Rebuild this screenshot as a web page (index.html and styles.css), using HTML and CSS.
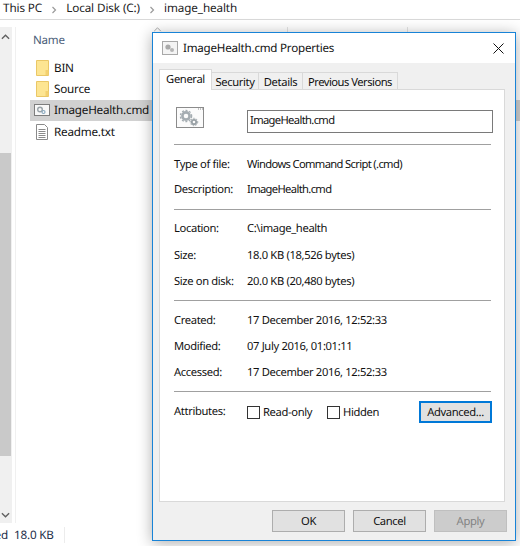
FILE: index.html
```html
<!DOCTYPE html>
<html lang="en">
<head>
<meta charset="utf-8">
<title>ImageHealth.cmd Properties</title>
<link rel="stylesheet" href="styles.css">
</head>
<body>
<div class="explorer">
  <div class="crumbs">
    <span>This PC</span>
    <svg class="chev" viewBox="0 0 6 8"><path d="M1.5 1l3 3-3 3" fill="none" stroke="#9a9a9a" stroke-width="1.2"/></svg>
    <span>Local Disk (C:)</span>
    <svg class="chev" viewBox="0 0 6 8"><path d="M1.5 1l3 3-3 3" fill="none" stroke="#9a9a9a" stroke-width="1.2"/></svg>
    <span>image_health</span>
  </div>
  <div class="main">
    <div class="scrollbar">
      <svg class="arrow" viewBox="0 0 10 6"><path d="M1 5l4-4 4 4" fill="none" stroke="#606060" stroke-width="1.5"/></svg>
      <div class="thumb"></div>
      <svg class="arrow" viewBox="0 0 10 6"><path d="M1 1l4 4 4-4" fill="none" stroke="#606060" stroke-width="1.5"/></svg>
    </div>
    <div class="files">
      <div class="col-head">Name</div>
      <ul class="file-list">
        <li class="file">
          <svg class="ficon" viewBox="0 0 16 16"><path d="M2.5.5h12v15h-12z" fill="#fde592" stroke="#eac766"/><path d="M11.5 15v-5h3v5z" fill="#f3d06f"/></svg>BIN
        </li>
        <li class="file">
          <svg class="ficon" viewBox="0 0 16 16"><path d="M2.5.5h12v15h-12z" fill="#fde592" stroke="#eac766"/><path d="M11.5 15v-5h3v5z" fill="#f3d06f"/></svg>Source
        </li>
        <li class="file selected">
          <svg class="ficon wide" viewBox="0 0 16 14"><rect x=".5" y="1.5" width="15" height="11" fill="#f8f8f8" stroke="#7d7d7d"/><circle cx="6" cy="6.5" r="2.3" fill="none" stroke="#9aa3a8" stroke-width="1.4"/><circle cx="9.5" cy="9" r="1.5" fill="none" stroke="#8aa9bf" stroke-width="1.2"/></svg>ImageHealth.cmd
        </li>
        <li class="file">
          <svg class="ficon" viewBox="0 0 16 16"><path d="M2.5.5h8l3 3v12h-11z" fill="#fff" stroke="#8a8a8a"/><path d="M4.5 5.5h7M4.5 7.5h7M4.5 9.5h7M4.5 11.5h7M4.5 13.5h7" stroke="#8a8a8a"/></svg>Readme.txt
        </li>
      </ul>
    </div>
  </div>
  <div class="status"><span class="clip">ed</span><span class="size">18.0 KB</span></div>
  <svg class="sort" viewBox="0 0 10 6"><path d="M1 5l4-4 4 4" fill="none" stroke="#9a9a9a"/></svg>
  <i class="head-sep sep-a"></i>
  <i class="head-sep sep-b"></i>
</div>

<section class="dialog">
  <header class="titlebar">
    <svg class="title-icon" viewBox="0 0 16 14"><rect x=".5" y=".5" width="15" height="13" fill="#f4f4f4" stroke="#a8a8a8"/><circle cx="6" cy="6" r="2.6" fill="#a9a9a9"/><circle cx="10" cy="9" r="2" fill="#b5b5b5"/></svg>
    <h1 class="title">ImageHealth.cmd Properties</h1>
    <svg class="close" viewBox="0 0 11 11"><path d="M.5.5l10 10M10.5.5l-10 10" stroke="#111" stroke-width="1"/></svg>
  </header>
  <div class="body">
    <nav class="tabs">
      <span class="tab active">General</span>
      <span class="tab t-sec">Security</span>
      <span class="tab t-det">Details</span>
      <span class="tab t-prev">Previous Versions</span>
    </nav>
    <div class="panel">
      <div class="name-row">
        <svg class="big-icon" viewBox="0 0 28 22">
          <rect x=".5" y=".5" width="27" height="20" fill="#fbfbfb" stroke="#8b8b8b"/>
          <path d="M22 2h1M24 2h1M26 2h1" stroke="#8b8b8b"/>
          <circle cx="10" cy="9" r="3.6" fill="none" stroke="#a5adb2" stroke-width="2.6"/>
          <circle cx="10" cy="9" r="5.6" fill="none" stroke="#a5adb2" stroke-width="1.4" stroke-dasharray="2 1.6"/>
          <circle cx="18" cy="15" r="2.2" fill="none" stroke="#98a0a5" stroke-width="1.8"/>
          <circle cx="18" cy="15" r="3.7" fill="none" stroke="#98a0a5" stroke-width="1" stroke-dasharray="1.5 1.2"/>
        </svg>
        <div class="name-box tight">ImageHealth.cmd</div>
      </div>
      <hr class="rule">
      <dl class="group g-type">
        <div class="row"><dt>Type of file:</dt><dd class="tight">Windows Command Script (.cmd)</dd></div>
        <div class="row"><dt>Description:</dt><dd class="tight">ImageHealth.cmd</dd></div>
      </dl>
      <hr class="rule">
      <dl class="group g-loc">
        <div class="row"><dt>Location:</dt><dd>C:\image_health</dd></div>
        <div class="row"><dt>Size:</dt><dd>18.0 KB (18,526 bytes)</dd></div>
        <div class="row"><dt>Size on disk:</dt><dd>20.0 KB (20,480 bytes)</dd></div>
      </dl>
      <hr class="rule">
      <dl class="group g-time">
        <div class="row"><dt>Created:</dt><dd>17 December 2016, 12:52:33</dd></div>
        <div class="row"><dt>Modified:</dt><dd>07 July 2016, 01:01:11</dd></div>
        <div class="row"><dt>Accessed:</dt><dd>17 December 2016, 12:52:33</dd></div>
      </dl>
      <hr class="rule">
      <div class="attrs">
        <span class="attr-label">Attributes:</span>
        <label class="check c-read"><i class="box"></i>Read-only</label>
        <label class="check c-hid"><i class="box"></i>Hidden</label>
        <span class="btn advanced">Advanced...</span>
      </div>
    </div>
    <footer class="actions">
      <span class="btn">OK</span>
      <span class="btn">Cancel</span>
      <span class="btn disabled">Apply</span>
    </footer>
  </div>
</section>
</body>
</html>
```
FILE: styles.css
```css
* { box-sizing: border-box; }
html, body { margin: 0; padding: 0; }
body {
  position: relative;
  width: 520px;
  height: 546px;
  overflow: hidden;
  background: #fff;
  color: #111;
  font-family: "Noto Sans", "Open Sans", sans-serif;
  font-size: 11.2px;
  letter-spacing: -0.35px;
  text-rendering: geometricPrecision;
}
.tight { letter-spacing: -0.65px; }
.explorer { position: relative; width: 520px; height: 546px; display: flex; flex-direction: column; }
.crumbs {
  height: 20px;
  border-bottom: 1px solid #d9d9d9;
  display: flex;
  align-items: flex-start;
  font-size: 11.7px;
  letter-spacing: -0.1px;
  line-height: 15px;
  padding: 1px 0 0 3px;
  gap: 9px;
  color: #222;
}
.chev { width: 6px; height: 8px; margin-top: 5px; }
.main { flex: none; height: 496px; margin-top: 7px; display: flex; }
.scrollbar {
  width: 12px;
  background: #f0f0f0;
  display: flex;
  flex-direction: column;
  align-items: flex-start;
  padding: 7px 0 5px;
}
.arrow { width: 9px; height: 6px; flex: none; margin-left: 1px; }
.thumb { width: 11px; height: 303px; margin-top: 113px; margin-bottom: 56px; background: #c9c9c9; flex: none; }
.files { flex: 1; min-width: 0; border-left: 1px solid #f0f0f0; margin-left: 3px; padding-left: 14px; }
.col-head { color: #4c607a; font-size: 11.6px; letter-spacing: -0.25px; line-height: 16px; padding: 6px 0 0 3px; height: 30px; }
.file-list { list-style: none; margin: 0 0 0 1px; padding: 0; }
.file { height: 21.3px; display: flex; align-items: center; padding-left: 3px; font-size: 11.7px; letter-spacing: -0.22px; position: relative; }
.file.selected { background: #d1d1d1; margin-left: -1px; padding-left: 4px; width: 490px; }
.ficon { width: 16px; height: 16px; margin-right: 4px; flex: none; }
.ficon.wide { height: 14px; }
.status { height: 23px; display: flex; align-items: center; font-size: 11.7px; letter-spacing: -0.2px; line-height: 16px; color: #222e4a; }
.clip { width: 8px; overflow: hidden; direction: rtl; }
.size { margin-left: 6px; padding-right: 10px; border-right: 1px solid #ececec; }
.sort { position: absolute; left: 153px; top: 27px; width: 9px; height: 5px; }
.head-sep { position: absolute; top: 27px; width: 1px; height: 6px; background: #e4e4e4; }
.sep-a { left: 287px; }
.sep-b { left: 407px; }

.dialog {
  position: absolute;
  left: 152px;
  top: 32px;
  width: 364px;
  height: 509px;
  border: 1px solid #1883d7;
  background: #f0f0f0;
  box-shadow: 0 2px 14px rgba(0,0,0,.32);
  display: flex;
  flex-direction: column;
}
.titlebar { height: 30px; flex: none; background: #fff; display: flex; align-items: center; padding: 0 11px 0 9px; }
.title-icon { width: 16px; height: 14px; margin-right: 5px; }
.title { margin: 0; font-size: 11.6px; font-weight: 400; flex: 1; letter-spacing: -0.22px; }
.close { width: 11px; height: 11px; }
.body { flex: 1; display: flex; flex-direction: column; padding: 7px 0 0 6px; }
.tabs { display: flex; height: 20px; align-items: flex-end; position: relative; z-index: 1; margin-bottom: -1px; }
.tab {
  height: 18px;
  background: #f0f0f0;
  border: 1px solid #d9d9d9;
  border-left: 0;
  padding-top: 2px;
  line-height: 16px;
  text-align: center;
  white-space: nowrap;
}
.tab.active { height: 21px; width: 53px; background: #fff; border: 1px solid #d9d9d9; border-bottom: 0; padding-top: 2px; }
.t-sec { width: 47px; }
.t-det { width: 44px; }
.t-prev { width: 95px; letter-spacing: -0.5px; }
.panel { width: 346px; height: 413px; background: #fff; border: 1px solid #d9d9d9; padding: 14px 14px 0; }
.name-row { display: flex; align-items: center; height: 31px; padding-left: 2px; margin-bottom: 9px; }
.big-icon { width: 28px; height: 22px; margin-top: -4px; flex: none; }
.name-box {
  flex: none;
  margin-left: 43px;
  width: 246px;
  height: 23px;
  border: 1px solid #7a7a7a;
  padding-left: 2px;
  line-height: 19px;
  margin-top: 3px;
}
.rule { height: 1px; margin: 0; border: 0; background: #a0a0a0; width: 317px; }
.group { margin: 0; }
.g-type { padding: 6px 0 8px; }
.g-loc { padding: 4.5px 0 6px; }
.g-time { padding: 5px 0 7px; }
.row { display: flex; height: 26px; align-items: center; }
.g-type .row { height: 25px; }
.g-loc .row { height: 26.5px; }
dt { width: 73px; flex: none; padding-top: 2px; }
dd { margin: 0; padding-top: 2px; }
.attrs { display: flex; align-items: center; height: 24px; margin-top: 8px; }
.attr-label { flex: none; width: 73px; margin-bottom: 2px; }
.check { flex: none; display: flex; align-items: center; }
.c-read { width: 80px; }
.c-hid { width: 92px; }
.box { flex: none; width: 13px; height: 13px; border: 1px solid #333; background: #fff; margin-right: 3px; }
.btn {
  flex: none;
  width: 73px;
  height: 22px;
  display: flex;
  align-items: center;
  justify-content: center;
  background: #e1e1e1;
  border: 1px solid #adadad;
}
.advanced { border: 2px solid #0078d7; }
.actions { display: flex; justify-content: flex-end; gap: 8px; padding: 8px 8px 0 0; }
.disabled { background: #cccccc; border-color: #bfbfbf; color: #838383; }
```
